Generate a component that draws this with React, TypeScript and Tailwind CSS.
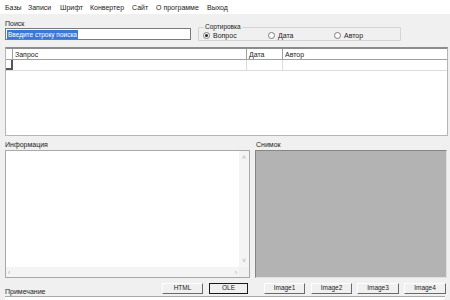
function Radio({ checked, label }: { checked?: boolean; label: string }) {
  return (
    <div className="flex items-center gap-[3px]">
      <span className="w-[7px] h-[7px] rounded-full border border-[#7a7a7a] bg-white flex items-center justify-center">
        {checked && <span className="w-[3px] h-[3px] rounded-full bg-[#222]" />}
      </span>
      <span>{label}</span>
    </div>
  );
}

function Btn({ label, w, def }: { label: string; w: string; def?: boolean }) {
  return (
    <div
      className={`${w} h-[11px] flex items-center justify-center bg-[#f0f0f0] border ${
        def
          ? "border-[#1a1a1a]"
          : "border-t-white border-l-white border-r-[#6a6a6a] border-b-[#6a6a6a]"
      }`}
    >
      <span className="leading-none">{label}</span>
    </div>
  );
}

export default function App() {
  return (
    <div
      className="w-[450px] h-[300px] overflow-hidden bg-[#f0f0f0] text-[7px] text-[#222] leading-none flex flex-col"
      style={{ fontFamily: '"Liberation Sans", Arial, sans-serif' }}
    >
      {/* menu */}
      <div className="h-[14px] flex items-center pl-[5px] bg-white">
        <span className="w-[23px]">Базы</span>
        <span className="w-[32px]">Записи</span>
        <span className="w-[30px]">Шрифт</span>
        <span className="w-[42px]">Конвертер</span>
        <span className="w-[24px]">Сайт</span>
        <span className="w-[51px]">О программе</span>
        <span>Выход</span>
      </div>

      {/* search + sort */}
      <div className="h-[33px] flex pl-[5px] pt-[5px]">
        <div className="w-[186px] flex flex-col">
          <span className="h-[9px] pt-[1px]">Поиск</span>
          <div className="h-[12px] bg-white border border-[#7a7a7a] flex items-center px-[1px]">
            <span className="bg-[#3a78d8] text-white px-[1px] leading-[9px] text-[6.5px]">Введите строку поиска</span>
          </div>
        </div>
        <fieldset className="ml-[7px] w-[203px] mt-[4px] self-start border border-[#d4d4d4] rounded-[1px] pl-[4px] pb-[1px]">
          <legend className="ml-[1px] px-[1px] text-[6.5px] leading-[8px]">Сортировка</legend>
          <div className="flex pt-[1px]">
            <div className="w-[65px]">
              <Radio checked label="Вопрос" />
            </div>
            <div className="w-[66px]">
              <Radio label="Дата" />
            </div>
            <Radio label="Автор" />
          </div>
        </fieldset>
      </div>

      {/* grid */}
      <div className="mx-[5px] w-[443px] h-[89px] bg-white border border-[#b5b5b5] border-t-2 border-t-[#8c8c8c] flex flex-col">
        <div className="h-[11px] flex border-b border-[#a0a0a0] bg-white">
          <div className="w-[7px] border-r border-[#a0a0a0]" />
          <div className="w-[234px] border-r border-[#a0a0a0] pl-[2px] flex items-center">Запрос</div>
          <div className="w-[36px] border-r border-[#a0a0a0] pl-[2px] flex items-center">Дата</div>
          <div className="flex-1 pl-[2px] flex items-center">Автор</div>
        </div>
        <div className="h-[11px] flex border-b border-[#dcdcdc]">
          <div className="w-[7px] border-r-2 border-b-2 border-[#555]" />
          <div className="w-[234px] border-r border-[#dcdcdc]" />
          <div className="w-[36px] border-r border-[#dcdcdc]" />
          <div className="flex-1" />
        </div>
      </div>

      {/* info + snapshot */}
      <div className="flex pl-[5px] h-[143px]">
        <div className="w-[245px] flex flex-col">
          <span className="h-[14px] pt-[5px]">Информация</span>
          <div className="h-[128px] bg-white border border-[#a8a8a8] flex flex-col">
            <div className="flex-1 flex">
              <div className="flex-1" />
              <div className="w-[10px] bg-[#f4f4f4] flex flex-col items-center justify-between py-[3px] text-[#b0b0b0] text-[7px]">
                <span>˄</span>
                <span>˅</span>
              </div>
            </div>
            <div className="h-[10px] flex">
              <div className="flex-1 bg-[#f4f4f4] flex items-center justify-between px-[2px] text-[#b0b0b0] text-[7px]">
                <span>‹</span>
                <span>›</span>
              </div>
              <div className="w-[10px] bg-[#f0f0f0]" />
            </div>
          </div>
        </div>
        <div className="ml-[5px] w-[192px] flex flex-col">
          <span className="h-[14px] pt-[5px] pl-[1px]">Снимок</span>
          <div className="h-[128px] bg-[#b3b3b3] border-t border-l border-[#858585] border-r border-r-[#e0e0e0] border-b border-b-[#e0e0e0]" />
        </div>
      </div>

      {/* buttons + note */}
      <div className="h-[15px] flex pl-[5px] pt-[4px] text-[6.5px]">
        <span className="w-[157px] pt-[5px] text-[7px]">Примечание</span>
        <Btn label="HTML" w="w-[41px]" />
        <div className="w-[6px]" />
        <Btn label="OLE" w="w-[39px]" def />
        <div className="w-[16px]" />
        <Btn label="Image1" w="w-[41px]" />
        <div className="w-[6px]" />
        <Btn label="Image2" w="w-[41px]" />
        <div className="w-[5px]" />
        <Btn label="Image3" w="w-[42px]" />
        <div className="w-[5px]" />
        <Btn label="Image4" w="w-[42px]" />
      </div>
      <div className="mx-[5px] mt-[2px] flex-1 bg-white border-t border-[#a8a8a8]" />
    </div>
  );
}
